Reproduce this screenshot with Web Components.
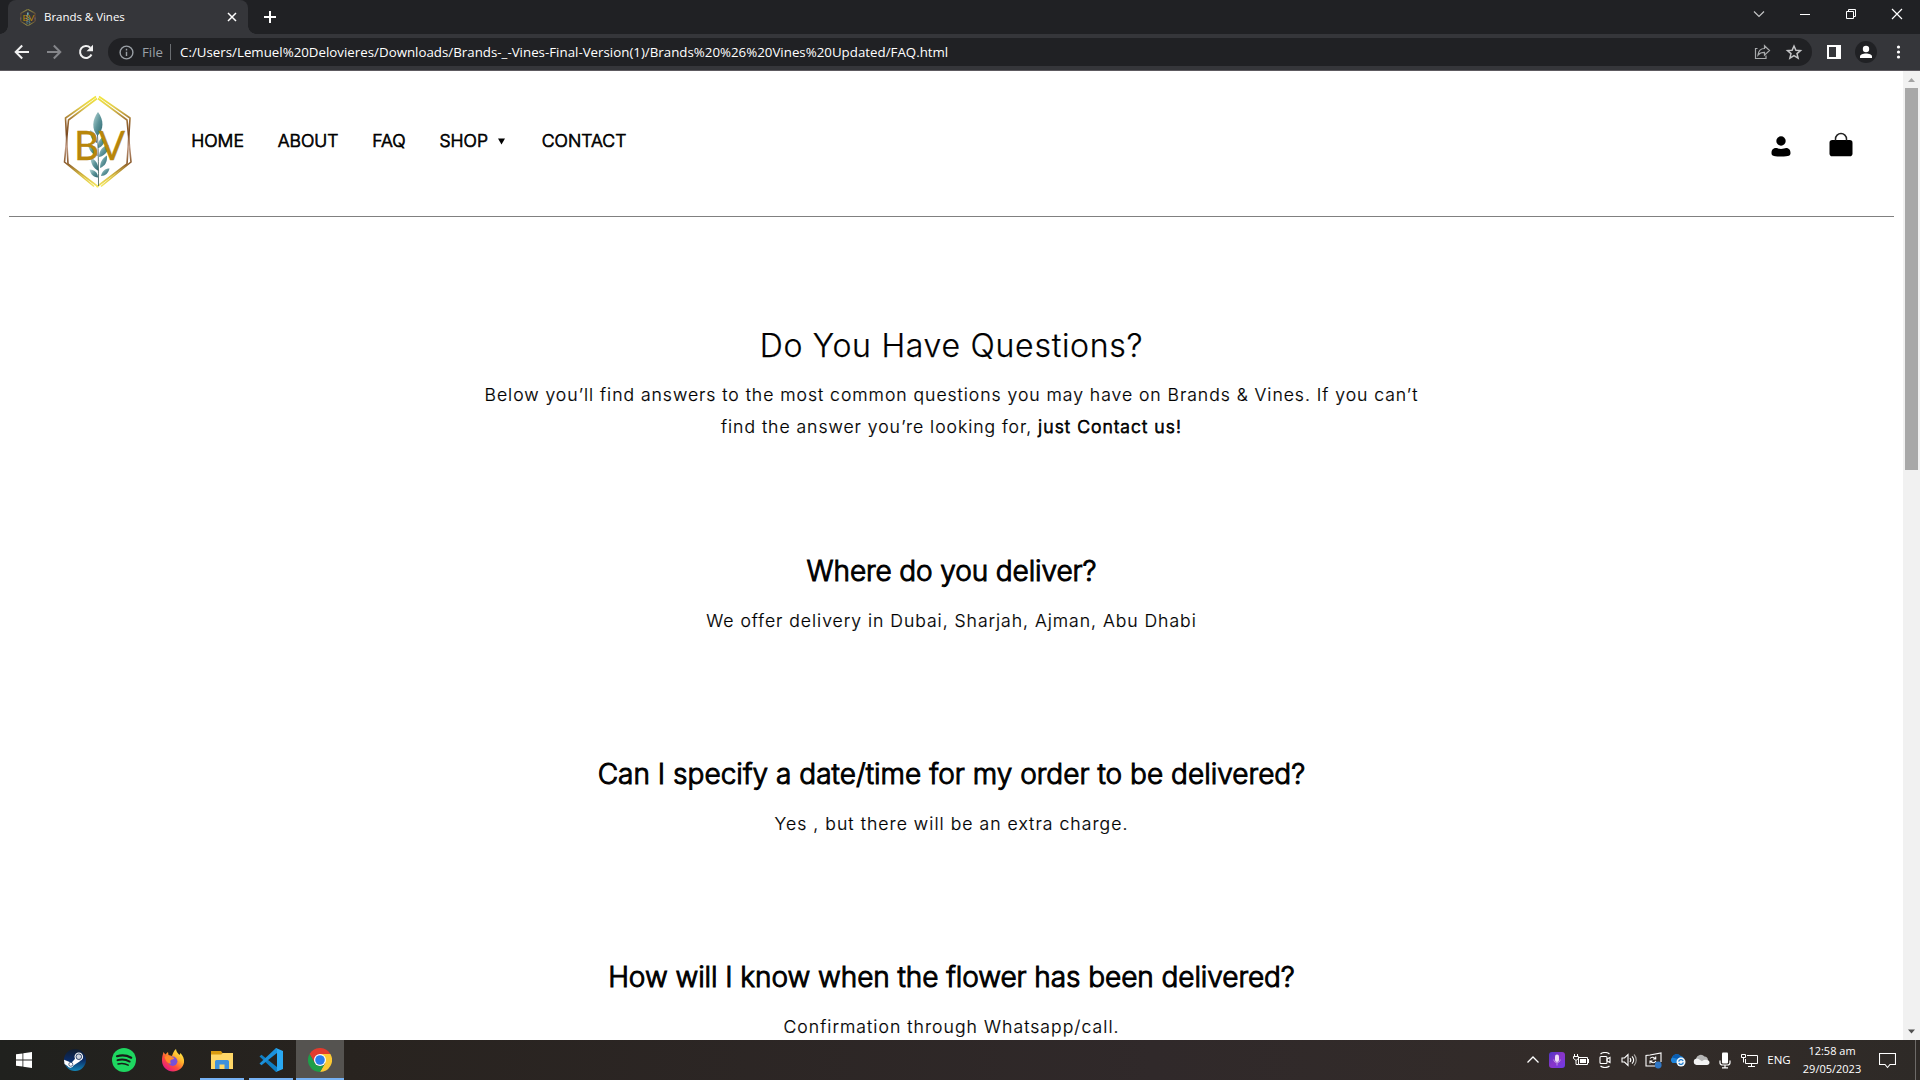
<!DOCTYPE html>
<html lang="en">
<head>
<meta charset="utf-8">
<title>Brands &amp; Vines</title>
<style>
html,body{margin:0;height:100%;overflow:hidden;background:#fff}
</style>
</head>
<body>
<desktop-screen>
  <browser-tabs slot="top">Brands &amp; Vines</browser-tabs>
  <browser-toolbar slot="top">C:/Users/Lemuel%20Delovieres/Downloads/Brands-_-Vines-Final-Version(1)/Brands%20%26%20Vines%20Updated/FAQ.html</browser-toolbar>
  <faq-page slot="page">
    <site-header slot="header">
      <nav-link>HOME</nav-link>
      <nav-link>ABOUT</nav-link>
      <nav-link>FAQ</nav-link>
      <nav-link menu>SHOP</nav-link>
      <nav-link>CONTACT</nav-link>
    </site-header>
    <faq-intro>
      <span slot="title">Do You Have Questions?</span>
      <span>Below you’ll find answers to the most common questions you may have on Brands &amp; Vines. If you can’t<br>find the answer you’re looking for, </span><b-link slot="link">just Contact us!</b-link>
    </faq-intro>
    <faq-item style="--q:-.12px;--a:.965px" question="Where do you deliver?">We offer delivery in Dubai, Sharjah, Ajman, Abu Dhabi</faq-item>
    <faq-item style="--q:.010px" question="Can I specify a date/time for my order to be delivered?">Yes , but there will be an extra charge.</faq-item>
    <faq-item question="How will I know when the flower has been delivered?">Confirmation through Whatsapp/call.</faq-item>
  </faq-page>
  <page-scrollbar slot="scroll"></page-scrollbar>
  <task-bar slot="bottom"></task-bar>
</desktop-screen>
<script>
const define = (name, html, setup) => customElements.define(name, class extends HTMLElement {
  constructor() {
    super();
    const t = document.createElement('template');
    t.innerHTML = html;
    this.attachShadow({mode: 'open'}).append(t.content.cloneNode(true));
  }
  connectedCallback() { if (setup) setup(this, this.shadowRoot); }
});

define('desktop-screen', `<style>
:host{display:flex;flex-direction:column;width:1920px;height:1080px;overflow:hidden}
.view{display:flex;flex:1;min-height:0;background:#fff}
</style><slot name="top"></slot><div class="view"><slot name="page"></slot><slot name="scroll"></slot></div><slot name="bottom"></slot>`);

const emblem = `
<defs>
 <linearGradient id="g" gradientUnits="userSpaceOnUse" x1="0" y1="0" x2="0" y2="94"><stop offset="0" stop-color="#f4ea3a"/><stop offset=".13" stop-color="#e2cc4c"/><stop offset=".28" stop-color="#9a6a34"/><stop offset=".42" stop-color="#7b4a20"/><stop offset=".55" stop-color="#c09a84"/><stop offset=".72" stop-color="#8a5a2c"/><stop offset=".86" stop-color="#d8bc3c"/><stop offset="1" stop-color="#fbf26a"/></linearGradient>
 <linearGradient id="l" x1="0" y1="0" x2="1" y2="1"><stop offset="0" stop-color="#b8d8d8"/><stop offset=".5" stop-color="#5d9499"/><stop offset="1" stop-color="#2b6670"/></linearGradient>
</defs>
<g fill="none" stroke="url(#g)" stroke-width="1.600" stroke-linejoin="round">
 <path d="M33 1.500 L2.500 23 L5 69 L35.500 92"/><path d="M34 3.500 L5.500 25 L1.500 67 L31 91.500"/>
 <path d="M36 1.500 L67 23 L64 69 L33.500 92"/><path d="M35 3.500 L64 25 L68 67 L38 91.500"/>
</g>
<g fill="url(#l)">
 <path d="M35 17 C29 25 28.500 34 34.500 41 C41 34 41 25 35 17Z"/>
 <path d="M34 48 C29 46 26.500 41 27 35 C32 37 34 42 34 48Z"/><path d="M35 53 C34.500 47 37 43 41.500 41.500 C42 47 40 52 35 53Z"/>
 <path d="M34.500 61 C28 59 25.500 54 25 48 C31 50 34.500 54 34.500 61Z"/><path d="M36 62 C36 55 40 51 45.500 50 C45.500 56 42 61 36 62Z"/>
 <path d="M35.500 76 C30 73 28 69 27.500 62.500 C33 65 35.500 69 35.500 76Z"/><path d="M37 73 C37 67 39.500 63 44 60.500 C44.500 67 42 71 37 73Z"/>
 <path d="M35 82.500 C30 82 27.500 79 26.500 74.500 C32 75 35 78 35 82.500Z"/><path d="M38 81 C39 76 42 73.500 46.500 73.500 C45.500 78 42.500 81 38 81Z"/>
</g>
<path d="M34.500 40 C35.500 58 35.500 75 35.500 91" fill="none" stroke="#3b5a58" stroke-width=".8"/>
<text x="11" y="64.700" font-family="Lato" font-size="40" font-weight="400" fill="#b8860b" stroke="#b8860b" stroke-width=".3" textLength="51" lengthAdjust="spacingAndGlyphs">BV</text>`;

define('browser-tabs', `<style>
:host{display:flex;height:34px;background:#202124;font:11.5px/34px "Open Sans",sans-serif;color:#fff;justify-content:space-between}
.left{display:flex;padding-left:8px}
.tab{position:relative;width:240px;height:34px;box-sizing:border-box;background:#35363a;border-radius:8px 8px 0 0;display:flex;align-items:center;padding:0 9px 0 12px}
.tab:before,.tab:after{content:"";position:absolute;bottom:0;width:8px;height:8px}
.tab:before{left:-8px;background:radial-gradient(circle at 0 0,#0000 7.5px,#35363a 8px)}
.tab:after{right:-8px;background:radial-gradient(circle at 100% 0,#0000 7.500px,#35363a 8px)}
.fav{width:16px;height:17px;margin-right:8px}
.name{flex:1;height:34px;line-height:33px;letter-spacing:-.03px}
.plus{margin:10px 0 0 15px}
.win{display:flex}
.win svg{width:46px;height:28px}
</style>
<div class="left"><div class="tab"><svg class="fav" viewBox="0 0 70 94" preserveAspectRatio="none">${emblem}</svg><span class="name"><slot></slot></span>
<svg width="14" height="14" viewBox="0 0 14 14" stroke="#fff" stroke-width="1.500"><path d="M3 3l8 8M11 3l-8 8"/></svg></div>
<svg class="plus" width="14" height="14" viewBox="0 0 14 14" stroke="#fff" stroke-width="2"><path d="M7 1v12M1 7h12"/></svg></div>
<div class="win">
<svg viewBox="0 0 46 28" fill="none" stroke="#c4c5c6" stroke-width="1.200"><path d="M18 11.500l5 5 5-5"/></svg>
<svg viewBox="0 0 46 28" fill="none" stroke="#fff"><path d="M18 14.500h10"/></svg>
<svg viewBox="0 0 46 28" fill="none" stroke="#fff"><path d="M18.500 11.500h7v7h-7zM20.500 11.500v-2h7v7h-2"/></svg>
<svg viewBox="0 0 46 28" fill="none" stroke="#fff" stroke-width="1.200"><path d="M18 9l10 10M28 9l-10 10"/></svg>
</div>`);

define('browser-toolbar', `<style>
:host{display:flex;align-items:center;height:37px;box-sizing:border-box;background:#35363a;border-bottom:1px solid #5d5a60;padding:0 8px 0 8px;font:13.3px/28px "Open Sans",sans-serif;color:#fff}
.nav{display:flex;gap:4px;padding-right:8px}
.nav svg{width:28px;height:28px}
.omni{display:flex;align-items:center;flex:none;box-sizing:border-box;width:1704px;height:28px;background:#202124;border-radius:14px;padding:0 6px 0 11px}
.info{margin-right:8px}
.file{color:#9aa0a6;line-height:28px;height:28px;width:28px}
.sep{width:1px;height:16px;background:#6a6d71;margin-right:9px}
.url{flex:1;line-height:28px;height:28px;white-space:nowrap;letter-spacing:.005px}
.omni .act{width:24px;height:24px;margin-left:8px}
.tools{display:flex;margin-left:6px}
.tools svg{width:32px;height:28px}
</style>
<div class="nav">
<svg viewBox="0 0 28 28" fill="none" stroke="#f1f1f1" stroke-width="2"><path d="M21 14H8.500M14.200 7.500L7.700 14l6.500 6.500"/></svg>
<svg viewBox="0 0 28 28" fill="none" stroke="#85868a" stroke-width="2"><path d="M7 14h12.500M13.800 7.500l6.500 6.500-6.500 6.500"/></svg>
<svg viewBox="0 0 28 28" fill="none" stroke="#f1f1f1" stroke-width="2"><path d="M19.500 16.500a6 6 0 1 1-1.200-6.800"/><path d="M21 6.700v6.500h-6.500z" fill="#f1f1f1" stroke="none"/></svg>
</div>
<div class="omni">
<svg class="info" width="15" height="15" viewBox="0 0 15 15" fill="none" stroke="#9aa0a6" stroke-width="1.400"><circle cx="7.500" cy="7.500" r="6.400"/><path d="M7.500 6.700v4.300M7.500 3.800v1.600"/></svg>
<span class="file">File</span><span class="sep"></span><span class="url"><slot></slot></span>
<svg class="act" viewBox="0 0 24 24" fill="none" stroke="#a8aaac" stroke-width="1.200"><path d="M7.500 8.500H5.500v10h10.500v-3"/><path d="M8 15c.5-4 3-6.500 6.500-6.500V5.700l5 4.800-5 4.700v-2.800c-2.800 0-4.800.6-6.500 2.600z"/></svg>
<svg class="act" viewBox="0 0 24 24" fill="none" stroke="#c3c4c6" stroke-width="1.500"><path d="M12 6l1.900 4.200 4.600.4-3.500 3 1.100 4.500L12 15.700l-4.100 2.400L9 13.600l-3.500-3 4.600-.4z"/></svg>
</div>
<div class="tools">
<svg viewBox="0 0 32 28"><path fill="#fff" fill-rule="evenodd" d="M9 7h14v14H9zM11 9v10h7V9z"/></svg>
<svg viewBox="0 0 32 28"><circle cx="16" cy="14" r="11" fill="#202124"/><circle cx="16" cy="11" r="3.200" fill="#fff"/><path fill="#fff" d="M10 20v-1.500c0-2 3-3 6-3s6 1 6 3V20z"/></svg>
<svg viewBox="0 0 32 28" fill="#fff"><circle cx="16.500" cy="9" r="1.600"/><circle cx="16.500" cy="14" r="1.600"/><circle cx="16.500" cy="19" r="1.600"/></svg>
</div>`);

define('faq-page', `<style>
:host{display:block;width:1903px;height:969px;overflow:hidden;background:#fff;color:#000;font:300 17.6px/32px Inter,sans-serif}
</style><slot name="header"></slot><slot></slot>`);

define('site-header', `<style>
:host{display:flex;align-items:flex-start;margin:0 9px;height:145px;border-bottom:1px solid #808080;line-height:24px}
.logo{width:70px;height:94px;margin:24px 0 0 54px}
nav{display:flex;margin:58px 0 0 58.200px;gap:33.800px;flex:1}
.icons{display:flex;margin:60px 40px 0 0;gap:36px}
</style>
<svg class="logo" viewBox="0 0 70 94">${emblem}</svg>
<nav><slot></slot></nav>
<div class="icons">
<svg width="22" height="28" viewBox="0 0 22 28"><circle cx="11" cy="10" r="4.700"/><path d="M1.500 22c0-3.600 2-5 4.500-5 1 0 3 1 5 1s4-1 5-1c2.500 0 4.500 1.400 4.500 5 0 2.500-1 3.500-9.500 3.500s-9.500-1-9.500-3.500z"/></svg>
<svg width="26" height="28" viewBox="0 0 26 28"><rect x="1.500" y="9" width="23" height="16.200" rx="2.800"/><path d="M7.500 9.500V8a5.500 5.500 0 0 1 11 0v1.500" fill="none" stroke="#222" stroke-width="1.500"/></svg>
</div>`);

define('nav-link', `<style>
:host{display:flex;align-items:center;-webkit-text-stroke:.7px #000}
svg{display:none;margin-left:9.500px}
:host([menu]) svg{display:block;margin-right:3.500px}
</style><slot></slot><svg width="7" height="7" viewBox="0 0 7 7"><path d="M0 .5h7L3.500 6.500z"/></svg>`);

define('faq-intro', `<style>
:host{display:block;box-sizing:border-box;height:334px;padding-top:109px;text-align:center;letter-spacing:.96px;-webkit-text-stroke:.2px #000}
h1{margin:0 0 13px;font-weight:300;font-size:32px;line-height:40px;letter-spacing:.73px;-webkit-text-stroke:.25px #000}
p{margin:0}
</style><h1><slot name="title"></slot></h1><p><slot></slot><slot name="link"></slot></p>`);

define('b-link', `<style>:host{display:inline;letter-spacing:1.070px;-webkit-text-stroke:.75px #000}</style><slot></slot>`);

define('faq-item', `<style>
:host{display:block;box-sizing:border-box;height:203px;text-align:center}
h2{margin:0 0 14px;font-weight:300;font-size:28px;line-height:40px;letter-spacing:var(--q,-.08px);-webkit-text-stroke:1px #000}
p{margin:0;letter-spacing:var(--a,1.040px);-webkit-text-stroke:.2px #000}
</style><h2></h2><p><slot></slot></p>`, (el, r) => { r.querySelector('h2').textContent = el.getAttribute('question'); });

define('page-scrollbar', `<style>
:host{display:flex;flex-direction:column;align-items:center;width:17px;background:#f1f1f1}
.thumb{width:13px;height:382px;background:#a8a8a8}
svg{display:block;width:17px;height:17px}
.gap{flex:1}
</style><svg viewBox="0 0 17 17"><path fill="#a3a3a3" d="M5 11l3.500-4L12 11z"/></svg><div class="thumb"></div><div class="gap"></div><svg viewBox="0 0 17 17"><path fill="#505050" d="M5 6.500l3.500 4 3.500-4z"/></svg>`);

define('app-button', `<style>
:host{display:flex;width:48px;height:40px;align-items:center;justify-content:center;box-sizing:border-box;margin-right:1px;border-bottom:2px solid transparent;padding-top:2px}
:host([open]){border-image:linear-gradient(90deg,#0000 4px,#76b2f5 4px,#76b2f5 44px,#0000 44px) 2}
:host([active]){background:#555350;border-bottom-color:#76b2f5}
</style><slot></slot>`);

define('tray-icon', `<style>:host{display:flex;width:24px;height:40px;align-items:center;justify-content:center}</style><slot></slot>`);

define('task-bar', `<style>
:host{display:flex;justify-content:space-between;height:40px;background:linear-gradient(90deg,#20211e,#28231f 18%,#30292a 60%,#332c29 85%,#2e2a27);color:#fff;font:11px/18px "Open Sans",sans-serif}
.apps,.tray{display:flex}
.apps>:first-child{margin-right:3px}
.lang{width:36px;text-align:center;line-height:40px;font-size:11.500px}
.clock{width:72px;text-align:center;padding-top:2px;margin-left:-1px}
.clock div{height:18px}
.note{width:38px;display:flex;align-items:center;justify-content:center;margin-right:9px}
.show{width:4px;border-left:1px solid #6d6a68}
svg{display:block;flex:none}
</style>
<div class="apps">
<app-button><svg width="16" height="16" viewBox="0 0 16 16" fill="#fff"><path d="M0 2.300L6.500 1.400V7.600H0zM7.300 1.300L16 0v7.600H7.300zM0 8.400h6.500v6.200L0 13.700zM7.300 8.400H16V16l-8.700-1.300z"/></svg></app-button>
<app-button><svg width="24" height="24" viewBox="0 0 24 24"><defs><linearGradient id="s" x1="0" y1="0" x2="0" y2="1"><stop stop-color="#111d2e"/><stop offset=".5" stop-color="#0a2b66"/><stop offset="1" stop-color="#1387b8"/></linearGradient></defs><circle cx="12" cy="12" r="11" fill="url(#s)"/><path d="M1 11.700l7.500 3 5-5.500 3.500 4-6.500 4.300a3.300 3.300 0 0 1-6 .4L1.500 16z" fill="#fff"/><circle cx="15.800" cy="8.700" r="4.300" fill="#fff"/><circle cx="15.800" cy="8.700" r="2.800" fill="#cfd5df" stroke="#17315c" stroke-width=".9"/><circle cx="7.800" cy="16.300" r="2" fill="none" stroke="#17315c" stroke-width=".7"/></svg></app-button>
<app-button><svg width="24" height="24" viewBox="0 0 24 24"><circle cx="12" cy="12" r="12" fill="#1ed760"/><g fill="none" stroke="#191c1a" stroke-linecap="round"><path d="M5 8.200c4.800-1.400 10-.9 14.200 1.500" stroke-width="2.200"/><path d="M5.500 12.200c4.100-1.200 8.600-.7 12.200 1.400" stroke-width="1.900"/><path d="M6 15.900c3.500-.9 7.100-.6 10.200 1.200" stroke-width="1.500"/></g></svg></app-button>
<app-button><svg width="24" height="24" viewBox="0 0 24 24"><defs><linearGradient id="f" x1=".9" y1=".1" x2=".2" y2=".95"><stop stop-color="#fff14a"/><stop offset=".35" stop-color="#ffb02b"/><stop offset=".65" stop-color="#ff4f39"/><stop offset="1" stop-color="#e31587"/></linearGradient></defs><path fill="url(#f)" d="M2.500 4l1.800 2.500L7 4l.5 3 3.500 1C12 5 13 2.500 15 1c.3 3 2 4.500 3.500 6L19.500 5C22 8 23.500 11 23 14.500 22 20 17.500 23.500 12 23.500S1 19 1 12.700C.8 9.500 1.700 7 2.500 4z"/><circle cx="11.700" cy="13.200" r="4.700" fill="#7850d8"/><path fill="#ff8b28" d="M3.500 9c2.500-1.700 5-1.400 7 0 1 .6 2.200.6 3 .8-.5 1.500-2.300 1.700-3.700 2.200-.9 1.200-.7 2.500.4 3.600-3 .2-5.300-1.700-6.700-6.600z"/></svg></app-button>
<app-button open><svg width="22" height="20" viewBox="0 0 22 20"><path fill="#d99b10" d="M0 1h10l1.500 2L10 5H0z"/><path fill="#ffd767" d="M0 4.500h10L11.500 3H22v16H0z"/><path fill="#3f91dc" d="M4 11.500q0-1.500 1.500-1.500h11q1.500 0 1.500 1.500V19h-4.500v-4.500h-5V19H4z"/></svg></app-button>
<app-button open><svg width="24" height="24" viewBox="0 0 24 24"><path fill="#0f7fc5" d="M0.500 8.500l2-1.800L18 19v4.500L17 24z"/><path fill="#1b91dc" d="M.5 15.500l2 1.800L18 5V.500L17 0z"/><path fill="#2aa8f2" d="M17 0l7 3v18l-7 3 1-1.500v-21z"/></svg></app-button>
<app-button active><svg width="24" height="24" viewBox="0 0 24 24"><path fill="#e33b2e" d="M12 6h10.400A12 12 0 0 0 1.600 6L6.800 15z"/><path fill="#fcc934" d="M12 24l5.200-9L12 6h10.400A12 12 0 0 1 12 24z"/><path fill="#1e9e4a" d="M1.600 6A12 12 0 0 0 12 24l5.200-9a6 6 0 0 1-10.400 0z"/><circle cx="12" cy="12" r="6" fill="#fff"/><circle cx="12" cy="12" r="4.800" fill="#2a7cec"/></svg></app-button>
</div>
<div class="tray">
<tray-icon><svg width="14" height="10" viewBox="0 0 14 10" fill="none" stroke="#fff" stroke-width="1.300"><path d="M1.500 7.500L7 2l5.500 5.500"/></svg></tray-icon>
<tray-icon><svg width="16" height="16" viewBox="0 0 16 16"><defs><linearGradient id="m" x1="0" x2="1" y2="1"><stop stop-color="#4d36c8"/><stop offset=".5" stop-color="#8a35c8"/><stop offset="1" stop-color="#6c3ae8"/></linearGradient></defs><rect width="16" height="16" rx="3" fill="url(#m)"/><rect x="6" y="2.500" width="4" height="7.500" rx="2" fill="#eddcf6"/><path d="M4.800 7.500c0 4.200 6.400 4.200 6.400 0M8 11v2.500" fill="none" stroke="#c9a8e6" stroke-width=".8"/></svg></tray-icon>
<tray-icon><svg width="16" height="14" viewBox="0 0 16 14" fill="none" stroke="#fff"><path d="M5.500 4.500h9v7h-9zM15.500 6v4M1.500 1v3M4.500 1v3M.5 3.500h5v2l-2 1.500h-1L.5 5.500zM3 7v4.500h2.500"/><path d="M7 6h6v4H7z" fill="#fff" stroke="none"/></svg></tray-icon>
<tray-icon><svg width="14" height="16" viewBox="0 0 14 16" fill="none" stroke="#fff" stroke-width="1.100"><path d="M2.500 2C5-.1 9-.1 11.500 2M2.500 14c2.500 2.100 6.500 2.100 9 0"/><rect x="2" y="4.500" width="7" height="7" rx="1"/><path d="M9 7l3-1.500v5L9 9z"/></svg></tray-icon>
<tray-icon><svg width="17" height="14" viewBox="0 0 17 14" fill="none" stroke="#fff" stroke-width="1.100"><path d="M1 5h2.500L7 1.500v11L3.500 9H1z"/><path d="M9 5c1 1.200 1 2.800 0 4M11 3.300c2 2.200 2 5.200 0 7.400"/><path d="M13 1.500c3 3.200 3 7.800 0 11" stroke="#a3a09e"/></svg></tray-icon>
<tray-icon><svg width="17" height="17" viewBox="0 0 17 17" fill="none" stroke="#fff" stroke-width="1.100"><path d="M10 14H1V3.500L5 3 16 1v9"/><path d="M5 6.500c1.500-2 4.500-1.500 5.500.5M10.700 4.500V7H8M11 9c-1.500 2.500-4.500 2-5.500 0M5 11.500V9h2.500"/><circle cx="13.200" cy="13" r="3.400" fill="#2f76c4" stroke="none"/></svg></tray-icon>
<tray-icon><svg width="17" height="14" viewBox="0 0 17 14"><path fill="#1d84dc" d="M3.500 10A3.500 3.500 0 0 1 3 4.500 5 5 0 0 1 11.500 3 4 4 0 0 1 15 7v3z"/><path fill="#0a5cb0" d="M3 4.500A5 5 0 0 1 11.500 3L9 6z"/><circle cx="12" cy="9" r="4.500" fill="#f2f8fd"/><path d="M9.700 8.700a2.400 2.400 0 0 1 4.500-.8M14.300 9.300a2.400 2.400 0 0 1-4.500.8" fill="none" stroke="#1878cc" stroke-width="1.200"/></svg></tray-icon>
<tray-icon><svg width="17" height="12" viewBox="0 0 17 12"><path fill="#b5b5b5" d="M3 4.500A5 5 0 0 1 11.500 2.500 4 4 0 0 1 15 6L9 9z"/><path fill="#f4f4f4" d="M3.500 11A3.300 3.300 0 0 1 3.500 4.500c2 0 4 2 5.500 2.700C12 5 16.500 5.500 16.500 8.500c0 1.500-1 2.500-2.500 2.500z"/></svg></tray-icon>
<tray-icon><svg width="12" height="17" viewBox="0 0 12 17" fill="none" stroke="#fff" stroke-width="1.200"><rect x="3" y=".5" width="6" height="11" rx="1" fill="#fff" stroke="none"/><path d="M1 8.500v2.300q0 2.200 2.500 2.200h5q2.500 0 2.500-2.200V8.500M6 13v3M3 15.800h6"/></svg></tray-icon>
<tray-icon><svg width="17" height="15" viewBox="0 0 17 15" fill="none" stroke="#fff"><path d="M6 2.500h10.500v8H4.500V6M10.500 10.500v3M7 13.500h7M.5 1.500h4v3h-4zM2.500 4.500v5"/></svg></tray-icon>
<div class="lang">ENG</div>
<div class="clock"><div>12:58 am</div><div>29/05/2023</div></div>
<div class="note"><svg width="17" height="17" viewBox="0 0 17 17" fill="none" stroke="#fff" stroke-width="1.100"><path d="M.5 1.500h16v11h-5.500L8.500 15.500 6 12.500H.5z"/></svg></div>
<div class="show"></div>
</div>`);
</script>
</body>
</html>
